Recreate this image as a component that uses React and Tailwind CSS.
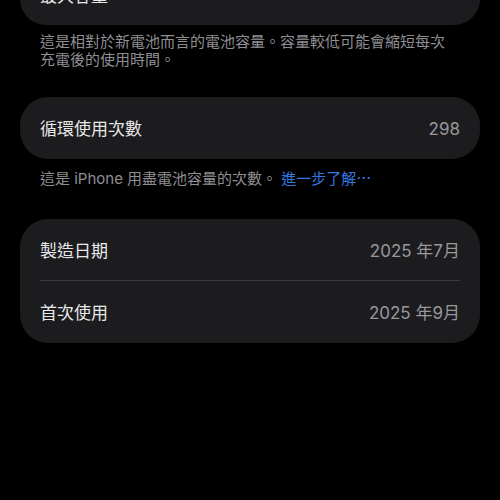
export default function App() {
  const font = { fontFamily: 'Inter, "Noto Sans CJK TC", "Noto Sans", sans-serif' };

  return (
    <div className="w-[500px] h-[500px] bg-black overflow-hidden" style={font}>
      {/* 最大容量 card, mostly scrolled off the top */}
      <div className="-mt-[37px] mx-5 h-[62px] rounded-[26px] bg-[#1c1c1e] flex items-center px-5 pt-[6px]">
        <span className="text-[17px] text-[#e8e8ea]">最大容量</span>
      </div>
      <p className="mt-[8px] px-10 pr-[52px] text-[15px] leading-[18px] text-[#8e8e93]">
        這是相對於新電池而言的電池容量。容量較低可能會縮短每次充電後的使用時間。
      </p>

      <div className="mt-[28px] mx-5 h-[62px] rounded-[28px] bg-[#1c1c1e] flex items-center justify-between px-5 pt-[4px]">
        <span className="text-[17px] text-[#e8e8ea]">循環使用次數</span>
        <span className="text-[17px] text-[#98989d]">298</span>
      </div>
      <p className="mt-[11px] px-10 text-[15px] leading-[18px] text-[#8e8e93]">
        這是 iPhone 用盡電池容量的次數。 <span className="text-[#3478e0]">進一步了解⋯</span>
      </p>

      <div className="mt-[31px] mx-5 rounded-[28px] bg-[#1c1c1e] px-5">
        <div className="h-[62px] flex items-center justify-between border-b border-[#38383a] pt-[4px]">
          <span className="text-[17px] text-[#e8e8ea]">製造日期</span>
          <span className="text-[17px] text-[#98989d]">2025 年7月</span>
        </div>
        <div className="h-[62px] flex items-center justify-between pt-[4px]">
          <span className="text-[17px] text-[#e8e8ea]">首次使用</span>
          <span className="text-[17px] text-[#98989d]">2025 年9月</span>
        </div>
      </div>
    </div>
  );
}
